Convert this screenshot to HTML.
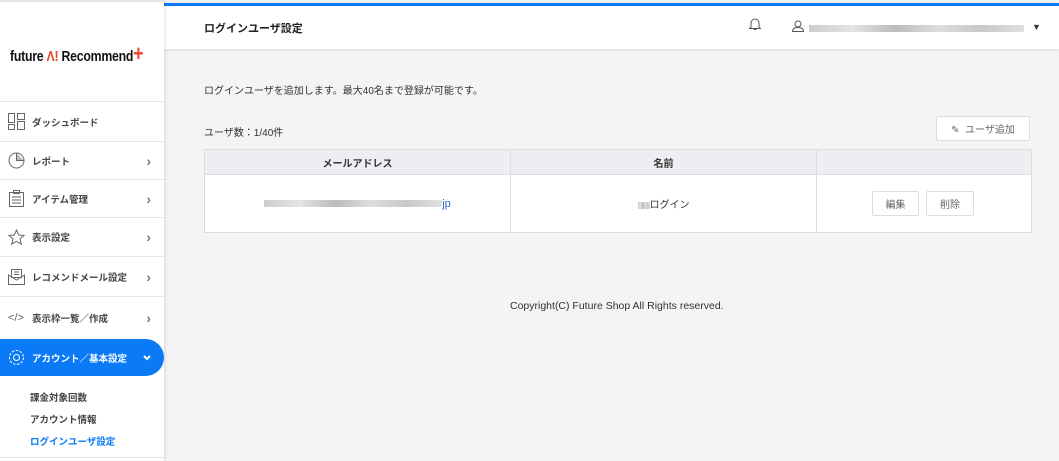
<!DOCTYPE html>
<html><head><meta charset="utf-8"><style>
*{box-sizing:border-box;margin:0;padding:0}
body{width:1059px;height:461px;overflow:hidden;background:#f4f4f4;font-family:"Liberation Sans","Noto Sans CJK JP",sans-serif;color:#333;position:relative}
.side{position:absolute;left:0;top:0;width:164px;height:461px;background:#fff;border-top:2px solid #e4e4e4;box-shadow:1px 0 3px rgba(0,0,0,.12);z-index:2}
.logo{position:absolute;left:10px;top:46px;font-size:15px;font-weight:bold;color:#111;letter-spacing:-.3px;white-space:nowrap;transform:scaleX(.82);transform-origin:left}
.item{position:absolute;left:0;width:164px;border-top:1px solid #e6e6e6;font-size:9.5px;font-weight:bold;color:#444;display:flex;align-items:center}
.item .ic{width:32px;display:flex;justify-content:center;color:#666}
.item .ar{position:absolute;right:13px;color:#777;font-size:14px;font-weight:bold}
.active{position:absolute;left:0;top:337px;width:164px;height:37px;background:#0a7af7;border-radius:0 19px 19px 0;color:#fff;font-size:9.5px;font-weight:bold;display:flex;align-items:center}
.sub{position:absolute;left:30px;font-size:9.5px;font-weight:bold;color:#444}
.hdr{position:absolute;left:164px;top:3px;right:0;height:46px;background:#fff;border-top:3px solid #0a7af7;box-shadow:0 1px 3px rgba(0,0,0,.12)}
.btn{position:absolute;background:#fff;border:1px solid #ddd;border-radius:2px;font-size:10px;color:#666;display:flex;align-items:center;justify-content:center}
table{position:absolute;left:204px;top:149px;width:828px;border-collapse:collapse;background:#fff;font-size:10px}
td,th{border:1px solid #ddd}
th{background:#eceef2;height:25px;font-weight:bold;color:#333}
td{height:58px;text-align:center}
.blur{display:inline-block;height:7px;background:linear-gradient(90deg,#ccc,#e4e4e4,#bbb,#ddd,#c8c8c8,#e0e0e0);vertical-align:middle}
</style></head><body>
<div class="side">
<div class="logo">future <span style="color:#e8452a">Λ!</span> Recommend<span style="color:#e8452a;font-size:22px;line-height:10px">+</span></div>
<div class="item" style="top:99px;height:40px"><span class="ic"><svg width="17" height="17" viewBox="0 0 17 17" fill="none" stroke="#666"><rect x=".5" y=".5" width="6" height="9"/><rect x="9.5" y=".5" width="7" height="6"/><rect x=".5" y="11.5" width="6" height="5"/><rect x="9.5" y="8.5" width="7" height="8"/></svg></span>ダッシュボード</div>
<div class="item" style="top:139px;height:38px"><span class="ic"><svg width="17" height="17" viewBox="0 0 17 17" fill="none" stroke="#666"><circle cx="8.5" cy="8.5" r="7.5"/><path d="M8.5 1v7.5h7.5" fill="#bbb"/></svg></span>レポート<span class="ar">›</span></div>
<div class="item" style="top:177px;height:38px"><span class="ic"><svg width="15" height="17" viewBox="0 0 15 17" fill="none" stroke="#666"><rect x=".5" y="2.5" width="14" height="14"/><rect x="4.5" y=".5" width="6" height="3"/><path d="M3 7h9M3 10h9M3 13h9"/></svg></span>アイテム管理<span class="ar">›</span></div>
<div class="item" style="top:215px;height:39px"><span class="ic"><svg width="17" height="17" viewBox="0 0 17 17" fill="none" stroke="#666"><path d="M8.5 1l2.2 5 5.3.4-4 3.5 1.3 5.3-4.8-2.9-4.8 2.9 1.3-5.3-4-3.5 5.3-.4z"/></svg></span>表示設定<span class="ar">›</span></div>
<div class="item" style="top:254px;height:40px"><span class="ic"><svg width="17" height="17" viewBox="0 0 17 17" fill="none" stroke="#666"><path d="M.5 7v9.5h16V7l-8 5z"/><rect x="3.5" y="1.5" width="10" height="8"/><path d="M6 4h5M6 6.5h5"/></svg></span>レコメンドメール設定<span class="ar">›</span></div>
<div class="item" style="top:294px;height:42px"><span class="ic" style="font-size:11px;font-weight:normal">&lt;/&gt;</span>表示枠一覧／作成<span class="ar">›</span></div>
<div class="active"><span style="width:32px;display:flex;justify-content:center"><svg width="17" height="17" viewBox="0 0 17 17" fill="none" stroke="#fff" stroke-dasharray="2.5 1.5"><circle cx="8.5" cy="8.5" r="7"/><circle cx="8.5" cy="8.5" r="3" stroke-dasharray="none"/></svg></span>アカウント／基本設定<svg style="position:absolute;right:13px;top:16px" width="8" height="6" viewBox="0 0 8 6" fill="none" stroke="#fff" stroke-width="2"><path d="M1 1l3 3 3-3"/></svg></div>
<div class="sub" style="top:388px">課金対象回数</div>
<div class="sub" style="top:410px">アカウント情報</div>
<div class="sub" style="top:432px;color:#0a7af7">ログインユーザ設定</div>
<div style="position:absolute;left:0;top:455px;width:164px;border-top:1px solid #e6e6e6"></div>
</div>
<div class="hdr">
<div style="position:absolute;left:40px;top:14px;font-size:11px;font-weight:bold;color:#222">ログインユーザ設定</div>
<svg style="position:absolute;left:585px;top:11px" width="12" height="14" viewBox="0 0 12 14" fill="none" stroke="#555"><path d="M2 10V6a4 4 0 018 0v4l1.5 1.5h-11z M4.5 12.5h3"/></svg>
<svg style="position:absolute;left:628px;top:14px" width="12" height="12" viewBox="0 0 12 12" fill="none" stroke="#555"><circle cx="6" cy="4" r="3"/><path d="M.5 11.5c0-3 2.5-4 5.5-4s5.5 1 5.5 4z"/></svg>
<span class="blur" style="position:absolute;left:645px;top:19px;width:215px"></span>
<span style="position:absolute;left:868px;top:16px;font-size:9px;color:#333">▼</span>
</div>
<div style="position:absolute;left:204px;top:82px;font-size:10px">ログインユーザを追加します。最大40名まで登録が可能です。</div>
<div style="position:absolute;left:204px;top:124px;font-size:10px">ユーザ数：1/40件</div>
<div class="btn" style="left:936px;top:116px;width:94px;height:25px">✎&nbsp; ユーザ追加</div>
<table><tr><th style="width:306px">メールアドレス</th><th style="width:306px">名前</th><th></th></tr>
<tr><td><span class="blur" style="width:178px"></span><span style="color:#2468c8;font-size:11px">jp</span></td><td><span class="blur" style="width:12px"></span>ログイン</td><td style="position:relative"></td></tr></table>
<div class="btn" style="left:872px;top:191px;width:47px;height:25px">編集</div>
<div class="btn" style="left:926px;top:191px;width:48px;height:25px">削除</div>
<div style="position:absolute;left:510px;top:300px;font-size:10.5px;color:#333">Copyright(C) Future Shop All Rights reserved.</div>
</body></html>
